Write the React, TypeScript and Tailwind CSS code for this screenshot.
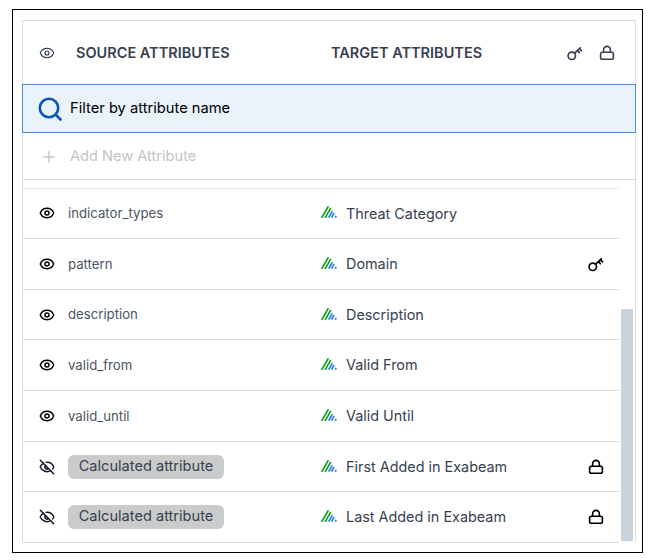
import React from 'react';
import { Eye, EyeOff, Plus } from 'lucide-react';

const font = "font-['Inter',sans-serif]";

const KeyIcon = ({ className }: { className: string }) => (
  <svg viewBox="0 0 16 16" fill="none" stroke="currentColor" strokeWidth="1.7" className={className}>
    <circle cx="4.8" cy="10.8" r="3.7" />
    <path d="M7.6 8.2 13.4 2.8M10.4 5.6l2 2M12.4 3.8l2.2 2" strokeLinecap="round" />
  </svg>
);

const LockIcon = ({ className }: { className: string }) => (
  <svg viewBox="0 0 16 16" fill="none" stroke="currentColor" strokeWidth="1.6" className={className}>
    <rect x="1.6" y="7.2" width="12.8" height="7" rx="1.8" />
    <path d="M4.6 7.2V4.8a3.4 3.4 0 0 1 6.8 0v2.4" />
  </svg>
);

const MappedIcon = () => (
  <svg viewBox="0 0 16 12" fill="none" strokeWidth="1.7" strokeLinecap="round" className="mb-[2px] h-3 w-4 shrink-0">
    <path d="M1 11.4 7 .8M4.4 11.4 9.4 2.6" stroke="#0fa01e" />
    <path d="M8 11 11 5.8M10.8 11 12.8 7.6" stroke="#2f80ed" />
    <path d="M14.6 11l.3-.5" stroke="#2f80ed" />
  </svg>
);

type Row = { source: string; target: string; key?: boolean; lock?: boolean; calculated?: boolean };

const rows: Row[] = [
  { source: 'indicator_types', target: 'Threat Category' },
  { source: 'pattern', target: 'Domain', key: true },
  { source: 'description', target: 'Description' },
  { source: 'valid_from', target: 'Valid From' },
  { source: 'valid_until', target: 'Valid Until' },
  { source: 'Calculated attribute', target: 'First Added in Exabeam', lock: true, calculated: true },
  { source: 'Calculated attribute', target: 'Last Added in Exabeam', lock: true, calculated: true },
];

export default function App() {
  return (
    <div className={`h-[560px] w-[655px] bg-white pl-3 pt-[9px] ${font}`}>
      <div className="h-[544px] w-[631px] border border-black bg-white pl-[9px] pt-[10px]">
        <div className="h-[522px] w-[614px] border border-b-0 border-[#dcdcdc]">
          <div className="flex h-[63px] items-center text-[14.5px] font-semibold text-[#374151]">
            <Eye className="ml-4 h-4 w-4" strokeWidth={1.8} />
            <span className="ml-[21px] w-[255px]">SOURCE ATTRIBUTES</span>
            <span className="w-[236px]">TARGET ATTRIBUTES</span>
            <KeyIcon className="h-4 w-4 text-[#374151]" />
            <LockIcon className="ml-4 h-4 w-4 text-[#374151]" />
          </div>

          <div className="-mx-px flex h-[49px] items-center border border-[#4a90d9] bg-[#eaf2fb]">
            <svg viewBox="0 0 24 24" fill="none" stroke="#0b57b8" strokeWidth="2.6" className="ml-[15px] h-6 w-6 shrink-0">
              <circle cx="11" cy="11" r="9.2" />
              <path d="m18 18 4.5 4.5" strokeLinecap="round" />
            </svg>
            <span className="ml-2 text-[14.7px] font-normal text-black">Filter by attribute name</span>
          </div>

          <div className="flex h-[47px] items-center border-b border-[#dcdcdc] pt-px text-[14.6px] text-[#c4c4c4]">
            <Plus className="ml-[17px] h-[18px] w-[18px]" strokeWidth={2} />
            <span className="ml-3">Add New Attribute</span>
          </div>

          <div className="flex pt-[7.5px]">
            <div className="w-[596px] border-t border-[#e3e3e3]">
              {rows.map((row) => (
                <div key={row.target} className="flex h-[50.67px] items-center border-b border-[#dcdcdc] text-[14.4px]">
                  <div className="flex w-[298px] items-center">
                    {row.calculated ? (
                      <EyeOff className="ml-4 h-4 w-4 shrink-0 text-[#111827]" strokeWidth={2.2} />
                    ) : (
                      <Eye className="ml-4 h-4 w-4 shrink-0 text-black" strokeWidth={2.2} />
                    )}
                    {row.calculated ? (
                      <span className="ml-[13px] flex h-6 w-[156px] items-center justify-center rounded-md bg-[#cbcbcb] text-[14.6px] text-[#374151]">
                        {row.source}
                      </span>
                    ) : (
                      <span className="ml-[13px] pt-px text-[13.2px] text-[#4b5563]">{row.source}</span>
                    )}
                  </div>
                  <MappedIcon />
                  <span className="ml-[9px] w-[242px] text-[#374151]">{row.target}</span>
                  {row.key && <KeyIcon className="h-4 w-4 text-black" />}
                  {row.lock && <LockIcon className="h-4 w-4 text-black" />}
                </div>
              ))}
            </div>
            <div className="ml-[2px] w-[12px] pt-[121px]">
              <div className="h-[232px] bg-[#c9d3de]" />
            </div>
          </div>
        </div>
      </div>
    </div>
  );
}
